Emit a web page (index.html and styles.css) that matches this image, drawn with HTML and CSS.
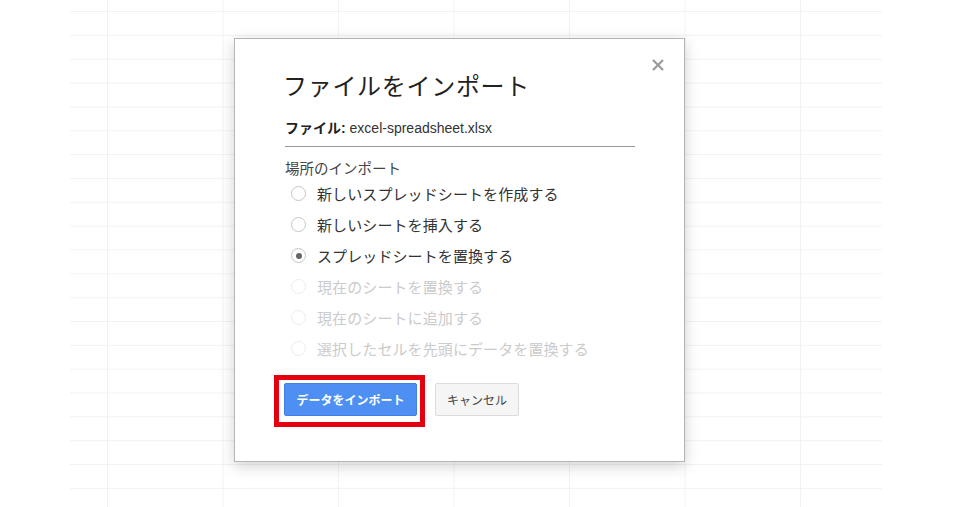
FILE: index.html
```html
<!DOCTYPE html>
<html lang="ja">
<head>
    <meta charset="UTF-8">
    <meta name="viewport" content="width=device-width, initial-scale=1.0">
    <title>ファイルをインポート</title>
    <link rel="stylesheet" href="styles.css">
</head>
<body>
    <div class="sheet">
        <div class="dialog">
            <button class="close" aria-label="閉じる">
                <svg width="12" height="12" viewBox="0 0 12 12"><path d="M1 1L11 11M11 1L1 11" stroke="#9a9a9a" stroke-width="2.2"/></svg>
            </button>
            <h2 class="title">ファイルをインポート</h2>
            <div class="file"><b>ファイル:</b> excel-spreadsheet.xlsx</div>

            <div class="section">場所のインポート</div>
            <label class="opt"><span class="radio"></span>新しいスプレッドシートを作成する</label>
            <label class="opt"><span class="radio"></span>新しいシートを挿入する</label>
            <label class="opt"><span class="radio checked"></span>スプレッドシートを置換する</label>
            <label class="opt disabled"><span class="radio"></span>現在のシートを置換する</label>
            <label class="opt disabled"><span class="radio"></span>現在のシートに追加する</label>
            <label class="opt disabled"><span class="radio"></span>選択したセルを先頭にデータを置換する</label>

            <div class="buttons">
                <span class="highlight"><button class="btn primary">データをインポート</button></span>
                <button class="btn">キャンセル</button>
            </div>
        </div>
    </div>
</body>
</html>
```

FILE: styles.css
```css
body { margin: 0; background: #fff; font-family: "Liberation Sans", Arial, "Noto Sans CJK JP", sans-serif; }
.sheet { width: 812px; height: 507px; margin-left: 70px; overflow: hidden; padding-top: 38px; box-sizing: border-box;
    background-image: linear-gradient(#f2f2f2 1px, transparent 1px), linear-gradient(90deg, #f2f2f2 1px, transparent 1px);
    background-size: 100% 23.85px, 115.5px 100%;
    background-position: 0 11px, 37px 0; }
.dialog { position: relative; width: 451px; height: 424px; margin-left: 164px; box-sizing: border-box; padding: 31px 49px 0 50px; background: #fff; border: 1px solid #b5b5b5; box-shadow: 0 4px 14px rgba(0, 0, 0, 0.18); }
.close { position: absolute; top: 20px; right: 20px; width: 12px; height: 12px; padding: 0; border: 0; background: none; display: flex; }
.title { margin: 0 0 0 -2px; font-family: "Noto Sans CJK JP", sans-serif; font-size: 24px; font-weight: normal; line-height: 30px; letter-spacing: 0.7px; color: #222; }
.file { margin-top: 18px; padding-bottom: 8px; border-bottom: 1px solid #999; font-size: 14px; line-height: 20px; color: #333; }
.file b { color: #222; }
.section { margin-top: 13px; font-size: 14.5px; line-height: 18px; color: #444; }
.opt { display: flex; align-items: center; height: 31px; font-size: 15px; color: #333; letter-spacing: 0.1px; }
.radio { width: 15px; height: 15px; margin: 0 11px 0 6px; box-sizing: border-box; border: 1px solid #c6c6c6; border-radius: 50%; display: flex; align-items: center; justify-content: center; }
.radio.checked::after { content: ""; width: 6px; height: 6px; border-radius: 50%; background: #666; }
.opt.disabled { color: #cbcbcb; }
.opt.disabled .radio { border-color: #ececec; }
.buttons { display: flex; align-items: flex-start; gap: 18px; margin-top: 19px; margin-left: -1px; }
.highlight { display: flex; border: 5px solid #e5000f; padding: 3px 3px 6px 5px; margin: -8px -8px -11px -10px; }
.btn { height: 33px; padding: 0 11px; font-family: "Liberation Sans", Arial, "Noto Sans CJK JP", sans-serif; font-size: 12px; color: #444; background: #f5f5f5; border: 1px solid #dcdcdc; border-radius: 2px; }
.btn.primary { width: 133px; font-weight: bold; color: #fff; background: #4d8ff2; border-color: #3f7fe6; }
```
